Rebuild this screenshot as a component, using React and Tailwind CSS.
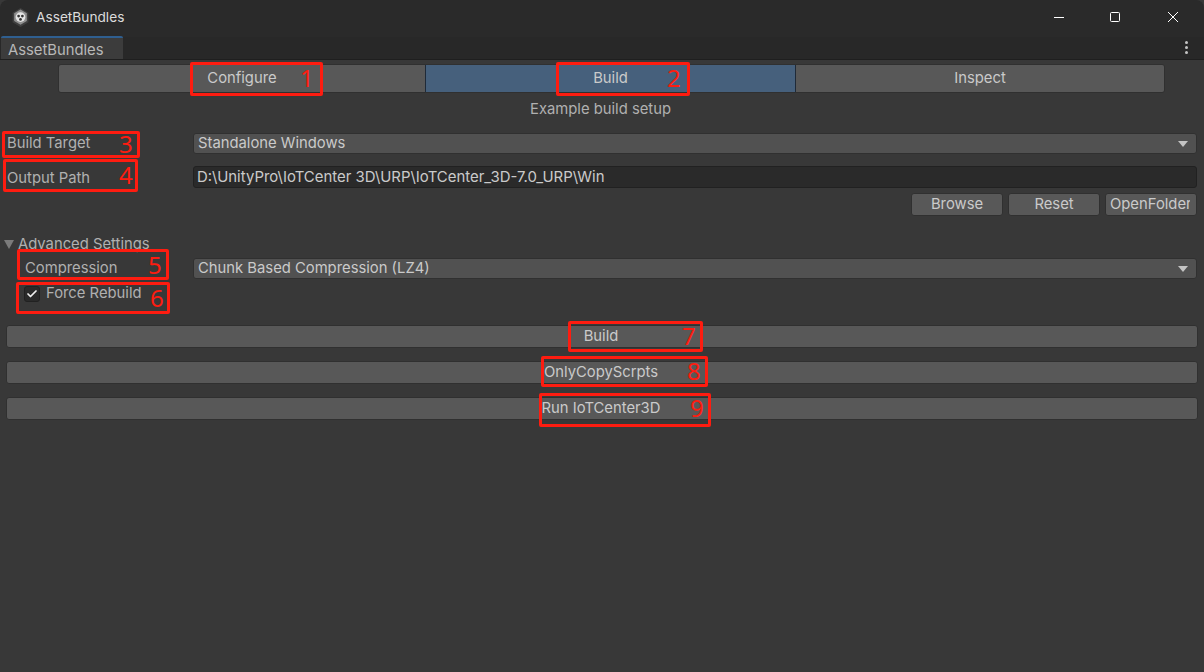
import React from 'react';
import { Check } from 'lucide-react';

const font = { fontFamily: 'Inter, "Noto Sans", sans-serif' };

// red annotation box drawn on top of the screenshot
const Mark = ({ box, num, numClass }) => (
  <div className={`absolute border-[3px] border-[#fe1c10] rounded-[2px] ${box}`}>
    <span className={`absolute text-[24px] font-normal leading-none text-[#fe1c10] ${numClass}`} style={{ fontFamily: '"Noto Sans", sans-serif' }}>
      {num}
    </span>
  </div>
);

const Dropdown = ({ label }) => (
  <div className="ml-[193px] mr-[7px] h-[21px] flex items-center justify-between pl-[4px] pr-[8px] bg-[#515151] border border-[#303030] rounded-[3px] text-[#cacaca] text-[14.8px]">
    <span>{label}</span>
    <svg width="10" height="6" viewBox="0 0 10 6"><path d="M0 0h10L5 6z" fill="#c4c4c4" /></svg>
  </div>
);

const SmallButton = ({ label, className }) => (
  <div className={`h-[23px] flex items-center bg-[#585858] border border-[#303030] rounded-[3px] text-[#cacaca] text-[14.8px] overflow-hidden whitespace-nowrap ${className}`}>
    {label}
  </div>
);

const WideButton = ({ label }) => (
  <div className="h-[23px] mx-[6px] pr-[2px] flex items-center justify-center bg-[#585858] border border-[#303030] rounded-[3px] text-[#cacaca] text-[14.8px]">
    {label}
  </div>
);

export default function App() {
  return (
    <div className="relative w-[1204px] h-[672px] overflow-hidden bg-[#383838]" style={font}>
      {/* title bar */}
      <div className="h-[37px] bg-[#2a2a2a] flex items-center rounded-t-[8px] pl-[12px] pb-[3px]">
        <svg width="17" height="19" viewBox="0 0 16 18">
          <path d="M8 0l7.5 4.4v9.2L8 18 .5 13.6V4.4z" fill="#3f3f3f" />
          <path d="M8 1.5l6 3.4v7.4l-6 3.5-6-3.5V4.9z" fill="#8f8f8f" />
          <circle cx="8" cy="8.6" r="4.6" fill="#e4e4e4" />
          <circle cx="6.2" cy="7.6" r="1.3" fill="#333" />
          <circle cx="9.8" cy="7.6" r="1.3" fill="#333" />
          <circle cx="8" cy="10.8" r="1.3" fill="#333" />
        </svg>
        <span className="ml-[7px] text-[#dcdcdc] text-[13.7px]">AssetBundles</span>
        <div className="ml-auto flex items-center">
          <svg width="12" height="12" viewBox="0 0 12 12" className="mr-[44px]"><path d="M1 6.5h10" stroke="#fff" strokeWidth="1" /></svg>
          <svg width="12" height="12" viewBox="0 0 12 12" className="mr-[46px]"><rect x="1.5" y="1.5" width="9" height="9" rx="1" fill="none" stroke="#fff" strokeWidth="1" /></svg>
          <svg width="12" height="12" viewBox="0 0 12 12" className="mr-[25px]"><path d="M1 1l10 10M11 1L1 11" stroke="#fff" strokeWidth="1" /></svg>
        </div>
      </div>

      {/* window tab strip */}
      <div className="h-[23px] bg-[#282828] border-b border-[#1f1f1f] flex items-end justify-between">
        <div className="ml-[1px] w-[122px] h-[23px] bg-[#3c3c3c] border-t-2 border-[#2f5f90] rounded-t-[2px] text-[#b8b8b8] text-[14.8px] pl-[7px] leading-[24px]">
          AssetBundles
        </div>
        <div className="mr-[16px] mb-[5px] flex flex-col gap-[2px]">
          <span className="w-[3px] h-[3px] rounded-full bg-[#c4c4c4]" />
          <span className="w-[3px] h-[3px] rounded-full bg-[#c4c4c4]" />
          <span className="w-[3px] h-[3px] rounded-full bg-[#c4c4c4]" />
        </div>
      </div>

      {/* toolbar */}
      <div className="mt-[4px] ml-[58px] w-[1107px] h-[29px] flex border border-[#303030] rounded-[3px] overflow-hidden text-[14.8px]">
        <div className="w-[366px] flex items-center justify-center bg-[#585858] text-[#cacaca]">Configure</div>
        <div className="w-[371px] flex items-center justify-center bg-[#46607c] border-x border-[#1f2a38] text-[#cacaca]">Build</div>
        <div className="flex-1 flex items-center justify-center bg-[#585858] text-[#cacaca]">Inspect</div>
      </div>
      <div className="mt-[6px] h-[20px] pr-[3px] text-center text-[#b0b0b0] text-[14.8px] leading-[20px]">Example build setup</div>

      {/* build target */}
      <div className="mt-[14px] relative">
        <span className="absolute left-[7px] top-0 leading-[21px] text-[#b0b0b0] text-[14.8px]">Build Target</span>
        <Dropdown label="Standalone Windows" />
      </div>

      {/* output path */}
      <div className="mt-[12px] relative">
        <span className="absolute left-[7px] top-[1px] leading-[22px] text-[#b0b0b0] text-[14.8px]">Output Path</span>
        <div className="ml-[193px] mr-[7px] h-[22px] flex items-center pl-[3px] bg-[#2a2a2a] border border-[#212121] rounded-[3px] text-[#cacaca] text-[14.95px]">
          D:\UnityPro\IoTCenter 3D\URP\IoTCenter_3D-7.0_URP\Win
        </div>
      </div>
      <div className="mt-[5px] mr-[7px] flex justify-end gap-[5px]">
        <SmallButton label="Browse" className="w-[92px] justify-center" />
        <SmallButton label="Reset" className="w-[92px] justify-center" />
        <SmallButton label={<span className="ml-[4px] w-[80px] overflow-hidden">OpenFolder</span>} className="w-[92px]" />
      </div>

      {/* advanced settings */}
      <div className="mt-[20px] h-[16px] flex items-center pl-[4px]">
        <svg width="10" height="9" viewBox="0 0 10 9"><path d="M0 0h10L5 9z" fill="#7b7b7b" /></svg>
        <span className="ml-[4px] text-[#b0b0b0] text-[14.8px]">Advanced Settings</span>
      </div>
      <div className="mt-[6px] relative">
        <span className="absolute left-[25px] top-0 leading-[21px] text-[#b0b0b0] text-[14.8px]">Compression</span>
        <Dropdown label="Chunk Based Compression (LZ4)" />
      </div>
      <div className="mt-[5px] ml-[24px] h-[19px] flex items-center">
        <div className="w-[16px] h-[16px] flex items-center justify-center bg-[#2a2a2a] border border-[#212121] rounded-[3px]">
          <Check size={12} strokeWidth={3.5} color="#f0f0f0" />
        </div>
        <span className="ml-[6px] text-[#b0b0b0] text-[14.8px]">Force Rebuild</span>
      </div>

      {/* actions */}
      <div className="mt-[22px] flex flex-col gap-[13px]">
        <WideButton label="Build" />
        <WideButton label="OnlyCopyScrpts" />
        <WideButton label="Run IoTCenter3D" />
      </div>

      {/* annotations */}
      <Mark box="left-[190px] top-[62px] w-[133px] h-[34px]" num="1" numClass="left-[107px] top-[1px]" />
      <Mark box="left-[556px] top-[62px] w-[134px] h-[34px]" num="2" numClass="left-[108px] top-[1px]" />
      <Mark box="left-[2px] top-[131px] w-[138px] h-[27px]" num="3" numClass="left-[114px] top-[-2px]" />
      <Mark box="left-[3px] top-[159px] w-[135px] h-[33px]" num="4" numClass="left-[113px] top-[1px]" />
      <Mark box="left-[17px] top-[249px] w-[152px] h-[31px]" num="5" numClass="left-[128px] top-[1px]" />
      <Mark box="left-[16px] top-[282px] w-[154px] h-[32px]" num="6" numClass="left-[131px] top-[1px]" />
      <Mark box="left-[568px] top-[321px] w-[135px] h-[31px]" num="7" numClass="left-[111px] top-[0px]" />
      <Mark box="left-[541px] top-[356px] w-[167px] h-[31px]" num="8" numClass="left-[143px] top-[0px]" />
      <Mark box="left-[539px] top-[393px] w-[172px] h-[34px]" num="9" numClass="left-[148px] top-[0px]" />
    </div>
  );
}
